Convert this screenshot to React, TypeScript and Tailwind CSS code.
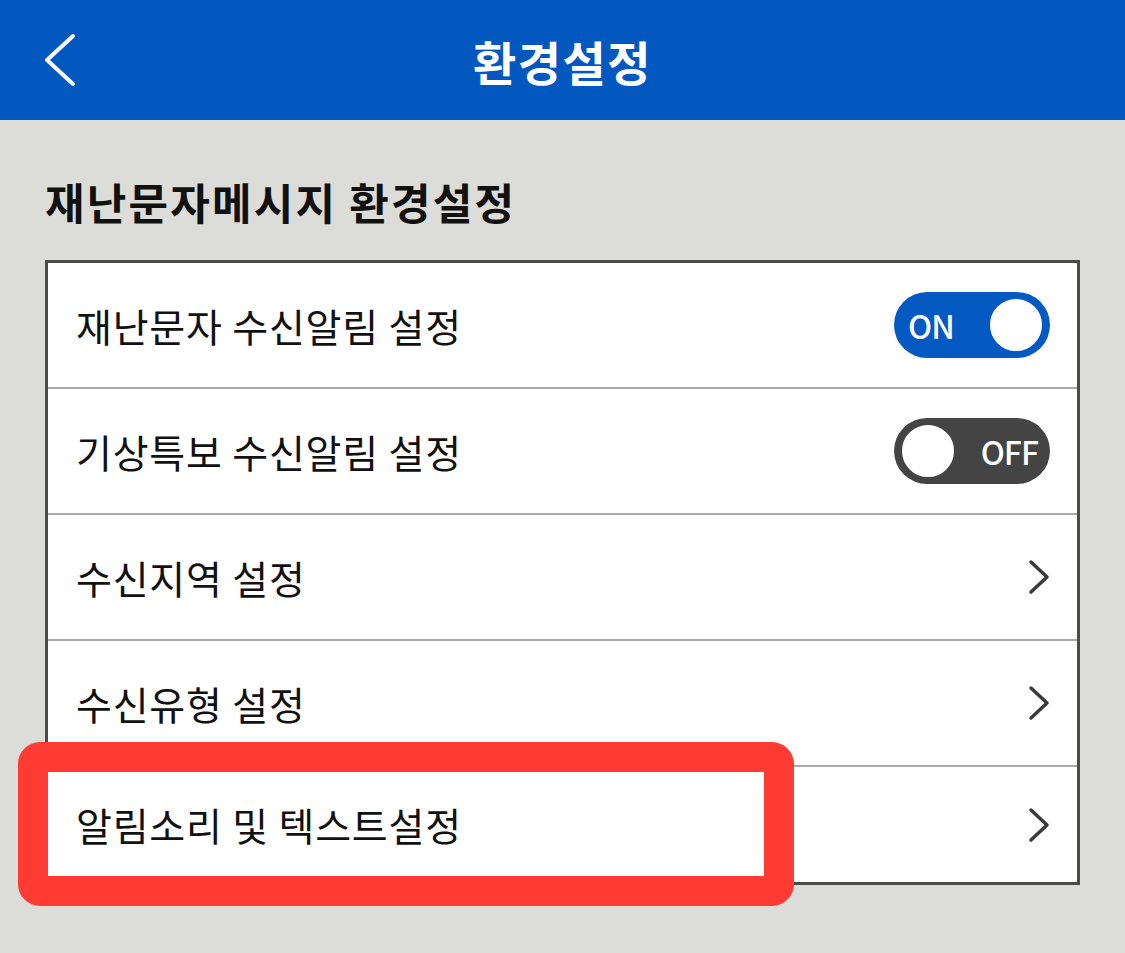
import React from 'react';

// Toggle switch drawn as a pill with a knob
const Toggle = ({ on }: { on: boolean }) =>
  on ? (
    <div className="flex h-[66px] w-[156px] items-center justify-between rounded-full bg-[#0459c3] pl-[14px] pr-[6px]">
      <span className="text-[32px] font-medium leading-none tracking-[-1px] text-white">ON</span>
      <span className="h-[56px] w-[56px] rounded-full border-2 border-[#0459c3] bg-white" />
    </div>
  ) : (
    <div className="flex h-[66px] w-[156px] items-center justify-between rounded-full bg-[#444444] pl-[6px] pr-[12px]">
      <span className="h-[56px] w-[56px] rounded-full border-2 border-[#444444] bg-white" />
      <span className="text-[32px] font-medium leading-none tracking-[-1px] text-white">OFF</span>
    </div>
  );

const Chevron = () => (
  <svg width="22" height="36" viewBox="0 0 22 36" fill="none">
    <path d="M3 3 L19 18 L3 33" stroke="#3a3a3a" strokeWidth="3.5" strokeLinecap="round" strokeLinejoin="round" />
  </svg>
);

interface Fila {
  texto: string;
  tipo: 'on' | 'off' | 'link';
}

const filas: Fila[] = [
  { texto: '재난문자 수신알림 설정', tipo: 'on' },
  { texto: '기상특보 수신알림 설정', tipo: 'off' },
  { texto: '수신지역 설정', tipo: 'link' },
  { texto: '수신유형 설정', tipo: 'link' },
  { texto: '알림소리 및 텍스트설정', tipo: 'link' },
];

export default function App() {
  return (
    <div
      className="relative min-h-[953px] w-[1125px] bg-[#dcdcd8]"
      style={{ fontFamily: '"Noto Sans CJK KR", "Noto Sans", sans-serif' }}
    >
      {/* Barra superior */}
      <header className="relative flex h-[120px] items-center justify-center bg-[#0358c0]">
        <svg className="absolute left-[42px] top-[32px]" width="36" height="56" viewBox="0 0 36 56" fill="none">
          <path d="M31 4 L5 28 L31 52" stroke="white" strokeWidth="4" strokeLinecap="round" strokeLinejoin="round" />
        </svg>
        <h1 className="text-[47px] font-bold leading-none tracking-[1.5px] text-white">환경설정</h1>
      </header>

      <div className="px-[45px] pt-[60px]">
        <h2 className="text-[43px] font-bold leading-none tracking-[2.2px] text-[#111]">재난문자메시지 환경설정</h2>

        <div className="mt-[37px] border-[3px] border-[#4a4a4a] bg-white">
          {filas.map((f, i) => (
            <div
              key={f.texto}
              className={`flex items-center justify-between pl-[28px] pr-[27px] ${
                i < filas.length - 1 ? 'h-[126px] border-b-2 border-[#aaaaaa]' : 'h-[115px]'
              }`}
            >
              <span className="text-[39px] leading-none tracking-[0.8px] text-[#111]">{f.texto}</span>
              {f.tipo === 'on' && <Toggle on />}
              {f.tipo === 'off' && <Toggle on={false} />}
              {f.tipo === 'link' && <Chevron />}
            </div>
          ))}
        </div>
      </div>

      {/* Resaltado rojo */}
      <div className="absolute left-[18px] top-[742px] h-[164px] w-[776px] rounded-[22px] border-[30px] border-[#ff3b33]" />
    </div>
  );
}
